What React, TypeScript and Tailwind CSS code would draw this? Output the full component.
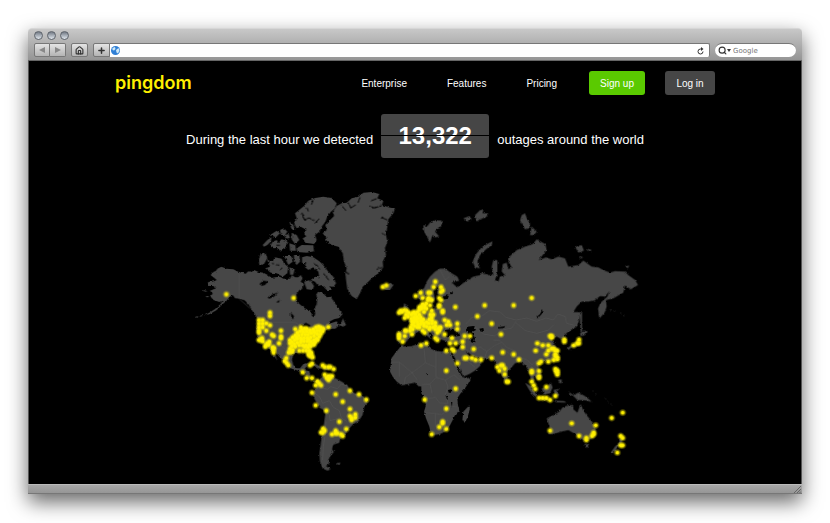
import { Home, Plus, Search } from "lucide-react";

type Pin = [number, number];

// Pin positions per region, as "x,y" pairs in that region's own space
const pinGroups: { dx: number; dy: number; pins: string }[] = [
  { dx: 0, dy: 0, pins: "139,343 341,354 608,321 619,316" },
  {
    // Americas
    dx: 180,
    dy: 330,
    pins:
      "90,68 90,78 57,90 68,90 57,101 68,101 79,100 90,106 57,112 68,112 57,122 79,122 57,128 57,150 66,144 68,154 62,150 76,170 82,160 88,155 86,164 78,166 96,134 101,138 123,122 123,139 123,145 117,160 98,172 102,174 100,180 101,188 " +
      "166,117 183,112 194,116 172,128 180,124 190,126 200,124 210,120 220,118 228,112 236,110 243,113 250,116 265,111 240,122 232,122 248,124 224,128 214,130 204,134 196,134 186,134 176,136 166,136 158,142 150,150 150,160 156,156 164,150 172,146 182,144 192,144 202,144 212,142 222,138 232,132 242,132 238,140 230,146 222,150 212,154 202,154 192,154 182,156 172,158 163,162 156,168 150,176 156,186 146,188 151,184 158,180 166,170 178,166 188,166 198,166 208,164 218,160 226,156 233,150 222,164 212,168 204,172 194,170 178,182 189,182 199,182 208,182 208,190 214,188 214,196 218,202 210,198 206,194 186,120 200,116 210,126 170,142 184,150 206,148 222,124 " +
      "139,204 134,213 140,219 145,226 188,247 200,264 216,264 216,221 210,226 248,226 254,231 265,231 271,231 281,237 254,254 260,263 266,258 271,262 266,270 276,258 264,264 232,274 237,280 243,286 227,286 216,308 227,346 259,362 287,313 308,335 330,302 357,313 379,329 330,357 346,373 330,378 335,384 346,383 335,390 298,395 319,417 287,422 292,430 276,433 287,430 303,433 308,438 249,416 254,422 243,427 248,428",
  },
  {
    // Europe, Africa and the Middle East
    dx: 600,
    dy: 300,
    pins:
      "166,5 161,21 183,21 188,31 183,36 122,38 145,38 151,38 107,48 128,54 145,54 150,58 155,60 144,60 178,54 183,60 139,70 134,76 128,72 118,82 124,86 134,84 140,86 150,76 178,75 177,80 188,92 188,97 155,92 160,104 151,104 132,96 124,80 118,90 " +
      "57,98 66,96 72,90 62,92 80,92 86,98 78,104 74,114 84,110 94,104 102,96 98,100 106,102 112,96 118,104 110,110 102,112 94,116 104,120 114,116 122,112 130,118 122,122 112,126 102,128 96,124 96,134 92,142 104,138 112,142 98,148 114,134 122,132 132,130 140,126 146,130 156,130 148,118 140,140 132,138 150,142 148,148 160,142 166,138 156,122 166,128 155,112 126,126 108,118 118,142 128,152 134,158 " +
      "75,152 90,152 96,163 57,162 57,168 57,175 74,168 68,185 79,152 166,148 172,158 178,152 182,142 176,146 166,174 172,180 177,144 194,120 205,125 200,135 210,135 232,131 232,147 194,163 216,174 210,190 227,190 216,207 221,212 199,212 248,185 248,201 254,168 270,168 281,207 123,196 139,190 226,81 292,109 314,76 401,76 335,131 363,163 232,250 254,234 260,234 276,234 287,239 303,239 335,234 368,217 401,223 417,239 352,261 363,256 368,256 374,266 358,272 374,283 380,305 385,305 199,272 227,326 134,359 199,386 188,425 188,430 178,441 199,447 155,463",
  },
  {
    // Asia-Pacific
    dx: 960,
    dy: 360,
    pins:
      "150,108 155,108 155,113 193,119 193,125 112,130 128,136 145,136 107,152 139,163 145,152 155,146 161,146 166,152 172,152 166,163 166,168 172,178 161,180 172,172 145,185 123,185 117,190 95,213 95,218 117,213 117,229 117,234 166,207 172,212 172,218 172,224 168,214 221,136 232,130 237,119 237,130 95,245 101,256 106,267 139,261 117,294 128,294 139,294 150,300 166,288 150,392 215,370 287,376 281,398 276,408 281,403 259,414 259,420 237,408 335,354 368,338 362,408 368,414 362,436 368,436 352,458 95,-6",
  },
];

const parsePins = (pins: string): Pin[] =>
  pins.split(" ").map((pair) => pair.split(",").map(Number) as Pin);

const WorldMap = () => (
  <svg viewBox="15 0 1380 900" className="w-full max-w-[460px]" role="img" aria-label="Outages around the world">
    <defs>
      <filter id="coast" x="-2%" y="-2%" width="104%" height="104%">
        <feTurbulence type="fractalNoise" baseFrequency="0.12" numOctaves="2" seed="4" />
        <feDisplacementMap in="SourceGraphic" scale="8" xChannelSelector="R" yChannelSelector="G" />
      </filter>
      <radialGradient id="glow">
        <stop offset="0.35" stopColor="#fff000" stopOpacity="0.7" />
        <stop offset="1" stopColor="#fff000" stopOpacity="0" />
      </radialGradient>
    </defs>

    <g fill="#464646" filter="url(#coast)">
      {/* North America */}
      <path d="M92 285L100 276 108 272 112 266 124 260 140 266 160 268 176 276 190 278 196 282 205 274 215 276 222 270 236 276 250 278 262 284 275 294 285 292 300 290 310 296 330 296 336 285 345 292 355 292 362 285 368 295 362 305 372 312 368 325 358 330 350 342 346 355 350 365 362 375 374 385 392 392 396 408 402 412 406 400 402 388 410 372 412 355 408 345 414 335 430 340 440 352 452 350 460 362 472 380 480 392 488 402 478 414 462 418 450 424 446 432 470 424 476 434 484 430 488 414 498 435 490 440 478 436 466 446 445 446 430 455 420 470 412 485 402 495 392 510 398 530 396 542 388 530 380 515 365 513 355 518 340 522 336 540 340 555 350 565 360 565 370 552 384 548 378 562 372 570 388 574 392 592 400 600 412 602 416 598 424 600 412 610 400 602 385 594 372 582 355 572 335 566 320 558 310 542 298 530 285 515 275 500 280 515 288 530 292 542 284 530 272 510 260 495 242 485 232 465 230 440 234 420 226 405 215 390 205 372 195 362 180 356 165 355 158 345 148 352 140 362 125 375 110 390 90 402 72 407 90 397 105 387 122 372 128 362 118 366 100 360 92 350 98 340 90 332 108 325 104 318 86 318 84 306 102 304 110 300Z" />
      <path d="M46 412L54 410M60 409L66 407M70 332L80 334M78 350L86 350" stroke="#464646" strokeWidth="3" />
      {/* Arctic islands */}
      <path d="M345 100L360 88 372 78 385 62 405 54 430 50 455 54 470 70 465 85 452 96 442 110 436 125 425 140 418 155 405 165 410 180 402 192 375 188 368 175 378 170 372 155 380 150 362 140 350 145 342 130 350 115Z M248 195L262 180 275 172 272 185 262 195 252 200Z M270 165L290 152 300 160 288 172Z M300 150L312 145 322 155 315 165 303 165Z M278 185L290 180 296 190 304 178 322 182 318 200 300 212 292 204 280 205 270 198Z M328 124L340 135 345 150 335 150Z M335 158L350 165 358 180 345 192 335 178Z M312 166L326 162 330 174 318 176Z M365 195L400 196 402 214 380 218 352 216 350 205Z M328 190L346 196 348 212 330 212Z M242 220L256 218 262 235 252 252 238 256 236 240Z M262 240L278 244 285 232 305 236 312 250 325 262 322 280 308 290 290 280 272 278 256 265 270 260Z M312 228L335 228 338 245 325 255Z M342 225L358 225 360 245 350 255 342 245Z M366 232L380 228 400 232 420 245 432 258 445 275 460 290 468 310 460 322 448 318 455 330 440 330 425 315 415 318 405 305 392 300 405 290 418 292 415 275 400 262 385 270 375 262 378 250 366 248Z M328 262L344 268 340 284 330 284Z M372 305L390 300 402 318 398 330 380 328Z" />
      {/* Greenland and Iceland */}
      <path d="M470 78L485 70 500 68 515 55 535 50 550 38 575 36 598 42 592 55 610 62 606 75 625 82 645 86 640 100 625 118 622 140 618 165 622 185 615 205 618 225 608 245 610 262 598 278 580 290 565 305 548 320 540 340 530 358 515 348 502 330 498 300 496 280 500 265 492 245 488 220 475 200 455 195 440 185 438 172 428 160 440 150 436 135 450 120 462 108 458 96Z M604 316L610 312 622 314 632 308 640 316 630 330 618 330 608 326Z" />
      {/* South America and the Caribbean */}
      <path transform="translate(180 330)" d="M232 272L245 262 255 255 268 262 282 262 300 272 322 285 330 300 345 310 360 312 378 325 384 335 372 352 368 375 355 395 340 402 328 415 318 430 308 440 300 448 298 458 280 464 276 478 282 485 270 500 264 512 268 520 258 528 272 538 262 542 248 535 240 515 238 490 242 465 246 430 252 400 256 370 250 360 238 352 225 330 218 315 220 305 228 295 232 280Z M288 520L302 517 298 523 290 524Z M205 222L220 218 238 228 246 234 238 236 222 228Z M250 232L268 232 268 240 252 240Z" />
      {/* Africa and Madagascar */}
      <path transform="translate(600 300)" d="M65 195L75 200 95 198 120 190 145 190 150 205 165 212 185 215 200 212 212 216 218 235 228 255 240 278 246 290 258 295 274 292 268 305 255 325 240 342 232 355 234 375 238 392 225 405 218 420 208 440 195 455 180 462 160 466 152 460 148 440 138 415 132 395 138 375 134 360 124 340 124 320 115 318 105 308 85 312 65 316 50 305 38 290 30 275 32 255 34 235 45 220 55 208Z M268 376L270 385 262 415 255 425 247 420 250 395Z" />
      {/* Eurasia */}
      <path d="M655 455L652 470 652 485 665 490 680 485 690 470 700 465 715 455 730 455 742 468 755 478 750 465 740 450 752 458 765 475 772 485 780 478 790 480 800 485 812 492 830 492 842 492 838 505 825 512 815 515 822 530 832 550 842 575 850 590 868 582 885 572 900 558 905 545 895 538 880 535 865 525 858 515 865 518 880 530 900 536 920 535 935 534 948 550 955 565 965 585 975 605 985 592 980 580 992 565 1005 550 1020 545 1035 555 1045 570 1052 595 1065 622 1068 628 1062 604 1062 588 1075 600 1085 588 1078 570 1075 555 1085 545 1110 545 1130 535 1138 515 1125 495 1115 478 1130 470 1145 478 1150 495 1158 488 1158 475 1154 465 1165 455 1190 440 1198 420 1202 398 1196 396 1180 396 1190 380 1205 365 1225 365 1245 360 1260 348 1275 350 1288 334 1282 350 1262 368 1254 385 1258 416 1274 398 1280 380 1278 360 1300 355 1330 338 1335 316 1352 328 1374 315 1366 300 1345 285 1335 275 1305 273 1290 278 1270 270 1255 262 1235 260 1210 242 1195 255 1165 260 1155 235 1135 230 1115 238 1098 232 1076 240 1100 210 1096 192 1070 178 1058 192 1035 200 1010 210 990 228 985 245 995 262 985 268 980 248 968 252 965 275 975 285 960 290 955 305 945 300 952 280 952 240 940 240 935 260 940 285 925 285 905 278 900 285 880 290 862 300 845 312 832 322 815 308 838 302 832 290 812 278 795 266 780 266 765 275 750 290 740 305 732 325 715 335 712 352 722 362 735 352 742 345 748 360 756 372 765 355 760 335 768 318 775 322 772 342 790 350 805 345 800 356 786 358 784 372 766 386 750 392 735 392 732 376 726 374 726 392 710 400 695 410 685 425 695 435 690 452Z" />
      <path d="M672 370L685 378 682 390 692 402 688 412 668 414 675 402 670 390Z M655 390L665 388 664 402 654 402Z" />
      {/* Arctic Russia and Svalbard */}
      <path transform="translate(600 0)" d="M338 184L325 190 305 202 288 222 278 245 285 262 300 265 292 245 300 225 318 208 335 195Z M130 135L142 138 150 128 165 120 185 122 185 138 172 145 165 155 178 170 165 172 158 165 150 188 142 172 132 155Z M250 115L268 108 275 118 262 125Z M285 105L300 90 310 88 308 100 325 100 318 112 300 118 290 125Z M425 105L435 100 442 118 450 130 448 145 435 148 428 135 420 122Z M455 140L470 155 462 165 450 165Z M585 200L605 195 612 212 595 218Z M618 205L635 210 630 215Z M598 228L610 232 600 236Z M735 260L748 257 744 264Z" />
      {/* Japan, South-East Asia and Oceania */}
      <path transform="translate(960 360)" d="M240 40L246 36 246 95 241 92Z M240 100L250 92 264 94 254 106 242 108Z M238 108L242 130 230 140 215 142 205 150 200 145 220 132 232 120Z M75 248L92 258 105 275 112 292 100 286 88 270Z M112 292L135 294 155 299 152 303 125 299Z M160 302L192 303 200 308 170 307Z M125 265L140 262 152 248 158 262 150 280 132 284Z M160 270L180 266 170 274 178 285 168 290Z M166 205L174 208 174 222 168 220Z M174 240L185 238 185 250 176 248Z M205 275L220 285 235 278 255 288 270 300 274 306 262 302 245 300 232 300 222 290 210 284Z M16 236L24 240 22 248 16 246Z M140 355L160 345 178 335 188 322 205 315 220 315 220 328 232 338 242 312 250 332 262 348 278 368 288 385 285 405 272 418 258 425 240 415 228 402 218 398 205 390 185 395 160 402 145 402 150 385Z M252 432L268 432 262 444Z M358 400L370 412 364 432 358 436 350 445 342 458 332 458 345 440 358 428Z" />
      <path d="M1290 390L1310 394M1320 398L1338 412M1238 632L1255 648M1275 655L1300 680" stroke="#333" strokeWidth="3" strokeDasharray="4 8" fill="none" />
    </g>

    {/* Lakes, inland seas and fjords */}
    <g fill="#000" filter="url(#coast)">
      <path d="M238 312L250 302 264 304 256 314 246 318Z M262 352L280 342 294 338 282 350 268 356Z M288 366L300 360 296 368Z M332 398L342 408 340 418 334 412Z M362 438L378 428 392 436 384 444 366 444Z" />
      <path transform="translate(600 300)" d="M196 150L210 148 225 152 238 160 240 168 220 170 200 172 192 162Z M262 140L280 138 288 150 276 156 285 175 282 190 270 185 268 165 258 152Z M298 146L310 144 312 152 302 156Z M204 330L214 328 214 338 206 338Z M196 345L200 344 204 360 199 356Z M213 366L217 366 216 384Z M138 280L144 280 144 286Z M208 36L220 38 214 46Z M190 50L206 48 204 56 192 58Z" />
      <path transform="translate(600 0)" d="M468 412L480 402 487 388 487 400 474 414Z M354 442L376 438 372 444 358 446Z" />
    </g>
    <g fill="none" stroke="#000" strokeWidth="3" filter="url(#coast)">
      <path d="M366 98L372 118 388 114 402 122M385 94L380 80M400 60L394 74M418 116L404 130M484 76L498 92M506 68L512 84 528 74M540 52L534 68M606 76L584 84 568 78M590 56L574 62M622 120L604 112M616 165L606 160M608 262L590 268M492 272L508 282M190 360L205 382 220 405M286 196L300 196M276 250L296 256M300 270L308 262M402 250L420 268M430 280L446 300" />
    </g>

    {/* Country borders */}
    <g fill="none" stroke="#5a5a5a" strokeWidth="2" opacity="0.7">
      <path d="M177 276V356L210 385M236 427H345L365 438M245 488L300 494 330 520" />
      <path transform="translate(180 330)" d="M242 292L262 298 272 290 292 296 304 282 322 288M226 310L240 322 248 340 268 332 280 352 298 362 304 384 320 394M256 364L268 374 270 392 292 386 304 400M258 396L256 430 250 470 248 510M292 420L304 428M262 262L268 280" />
      <path transform="translate(600 300)" d="M34 246L58 246 96 278 136 248 132 206M58 246V290M96 278L76 292 72 314M136 248L168 262V214M168 262V292L150 312 126 314M168 292L196 300 222 284 240 300M196 300L204 320 196 344 204 370 178 368 166 352 138 356M222 320L236 338M206 378L232 380M136 398L166 400 184 404 202 392M166 400V440L182 428 204 420M96 278L112 300M150 312L156 340M220 240L258 240 286 262M252 206L276 216 300 200 320 214 312 240M320 214L344 196 366 186 380 202 410 214M340 180L362 182" />
      <path transform="translate(600 0)" d="M258 432L276 412 306 408 328 392 360 396 378 412 408 420 440 414 470 424 498 414 520 420 534 402 556 410 560 430 584 436M408 428L436 452 470 460 506 450 522 434M284 440L310 462 344 468 368 450 396 444 408 424M156 372L164 382 186 376M180 268L196 300 208 290M152 402L156 424 176 430 196 440" />
      <path transform="translate(960 360)" d="M2 140L34 166 60 172 82 180 96 194 110 182M236 282V300M92 196L104 212" />
    </g>

    {pinGroups.map(({ dx, dy, pins }) => (
      <g key={`${dx}-${dy}`} transform={`translate(${dx} ${dy})`}>
        {parsePins(pins).map(([x, y], i) => (
          <g key={i}>
            <circle cx={x} cy={y} r={12} fill="url(#glow)" />
            <circle cx={x} cy={y} r={5} fill="#fff000" />
          </g>
        ))}
      </g>
    ))}
  </svg>
);

const toolButton =
  "h-3.5 flex items-center justify-center border border-[#777] bg-linear-to-b from-[#e4e4e4] to-[#b4b4b4] text-[#333]";

const BrowserBar = () => (
  <div className="rounded-t border-t border-[#d6d6d6] border-b border-b-[#666] bg-linear-to-b from-[#c8c8c8] to-[#959595] px-[6px] pt-[2px] pb-[3px]">
    <div className="flex gap-1 pb-[3px]">
      {["Close", "Minimise", "Zoom"].map((name) => (
        <button
          key={name}
          aria-label={name}
          className="size-[9px] rounded-full border border-[#5d636b] bg-linear-to-b from-[#737b86] to-[#e2e8ee]"
        />
      ))}
    </div>
    <div className="flex items-center">
      <button aria-label="Back" className={`${toolButton} w-4 rounded-l-[2px]`}>
        <svg viewBox="0 0 6 6" className="size-[6px]" fill="#888"><path d="M6 0v6L0 3z" /></svg>
      </button>
      <button aria-label="Forward" className={`${toolButton} w-4 rounded-r-[2px] border-l-0`}>
        <svg viewBox="0 0 6 6" className="size-[6px]" fill="#888"><path d="M0 0v6l6-3z" /></svg>
      </button>
      <button aria-label="Home" className={`${toolButton} ml-[5px] w-[17px] rounded-[2px]`}>
        <Home className="size-[9px]" strokeWidth={3} />
      </button>
      <button aria-label="Add bookmark" className={`${toolButton} ml-[5px] w-[17px] rounded-l-[2px]`}>
        <Plus className="size-[9px]" strokeWidth={4} />
      </button>
      <div className="flex h-3.5 flex-1 items-center rounded-r-[2px] border-t border-r border-[#777] bg-white px-[1px]">
        <svg viewBox="0 0 18 18" className="size-[9px]">
          <circle cx="9" cy="9" r="9" fill="#2f7fd6" />
          <path d="M3 4l5-2 1 4-3 3-3-1zM10 8l5-4 2 5-3 6-3-2z" fill="#cfe9f7" />
        </svg>
        <input aria-label="Address" className="h-full min-w-0 flex-1 bg-transparent text-[8px] outline-none" />
        <button aria-label="Reload" className="pr-1 text-[#333]">
          <svg viewBox="0 0 14 16" className="h-2 w-[7px]" fill="none" stroke="currentColor" strokeWidth="2">
            <path d="M9 4H7a5 5 0 1 0 5 5" />
            <path d="M8 0l5 4-5 4z" fill="currentColor" stroke="none" />
          </svg>
        </button>
      </div>
      <div className="ml-[5px] flex h-3.5 w-[81px] items-center rounded-full border-t border-[#777] bg-white pl-[3px] text-[#333]">
        <Search className="size-[9px]" strokeWidth={3} />
        <svg viewBox="0 0 4 3" className="h-[3px] w-1" fill="#333"><path d="M0 0h4L2 3z" /></svg>
        <input
          aria-label="Search"
          placeholder="Google"
          className="ml-[2px] h-full min-w-0 flex-1 bg-transparent font-['DejaVu_Sans'] text-[7px] outline-none placeholder:text-[#777]"
        />
      </div>
    </div>
  </div>
);

const navLinks = ["Enterprise", "Features", "Pricing"];

const SiteHeader = () => (
  <header className="mx-auto flex max-w-[600px] items-center justify-between text-[10px]">
    <a href="#" className="font-[Inter,sans-serif] text-[18px] leading-6 font-semibold text-[#fff000]">
      pingdom
    </a>
    <div className="flex items-center">
      <nav className="mr-8 flex gap-10">
        {navLinks.map((link) => (
          <a key={link} href="#">{link}</a>
        ))}
      </nav>
      <button className="h-6 w-14 rounded-[3px] bg-[#5aca00]">Sign up</button>
      <button className="ml-5 h-6 w-[50px] rounded-[3px] bg-[#464646]">Log in</button>
    </div>
  </header>
);

const App = () => {
  return (
    <div className="min-h-screen bg-white p-7 font-['Liberation_Sans',Arial,sans-serif]">
      <div className="rounded-t shadow-[0_8px_20px_rgba(0,0,0,0.6)]">
        <BrowserBar />

        <main className="border-x border-[#555] bg-black px-5 pt-[10px] pb-1 text-white">
          <SiteHeader />

          <h1 className="mt-[19px] flex items-baseline justify-center gap-2 text-[13px]">
            <span>During the last hour we detected</span>
            <span className="relative h-11 w-[108px] rounded-[3px] bg-[#464646] text-center text-[24px] leading-[44px] font-bold">
              13,322
              <span className="absolute inset-x-0 top-[21px] h-px bg-black" />
            </span>
            <span>outages around the world</span>
          </h1>

          <div className="mt-[22px] flex justify-center">
            <WorldMap />
          </div>
        </main>

        {/* Status bar with resize grip */}
        <div className="flex h-[10px] items-end justify-end border-t border-b border-t-[#bbb] border-b-[#777] bg-linear-to-b from-[#a8a8a8] to-[#969696] pr-[1px]">
          <svg viewBox="0 0 7 7" className="size-[7px]" stroke="#666" strokeWidth="1">
            <path d="M0 7L7 0M3 7L7 3M5.5 7L7 5.5" />
          </svg>
        </div>
      </div>
    </div>
  );
};

export default App;
